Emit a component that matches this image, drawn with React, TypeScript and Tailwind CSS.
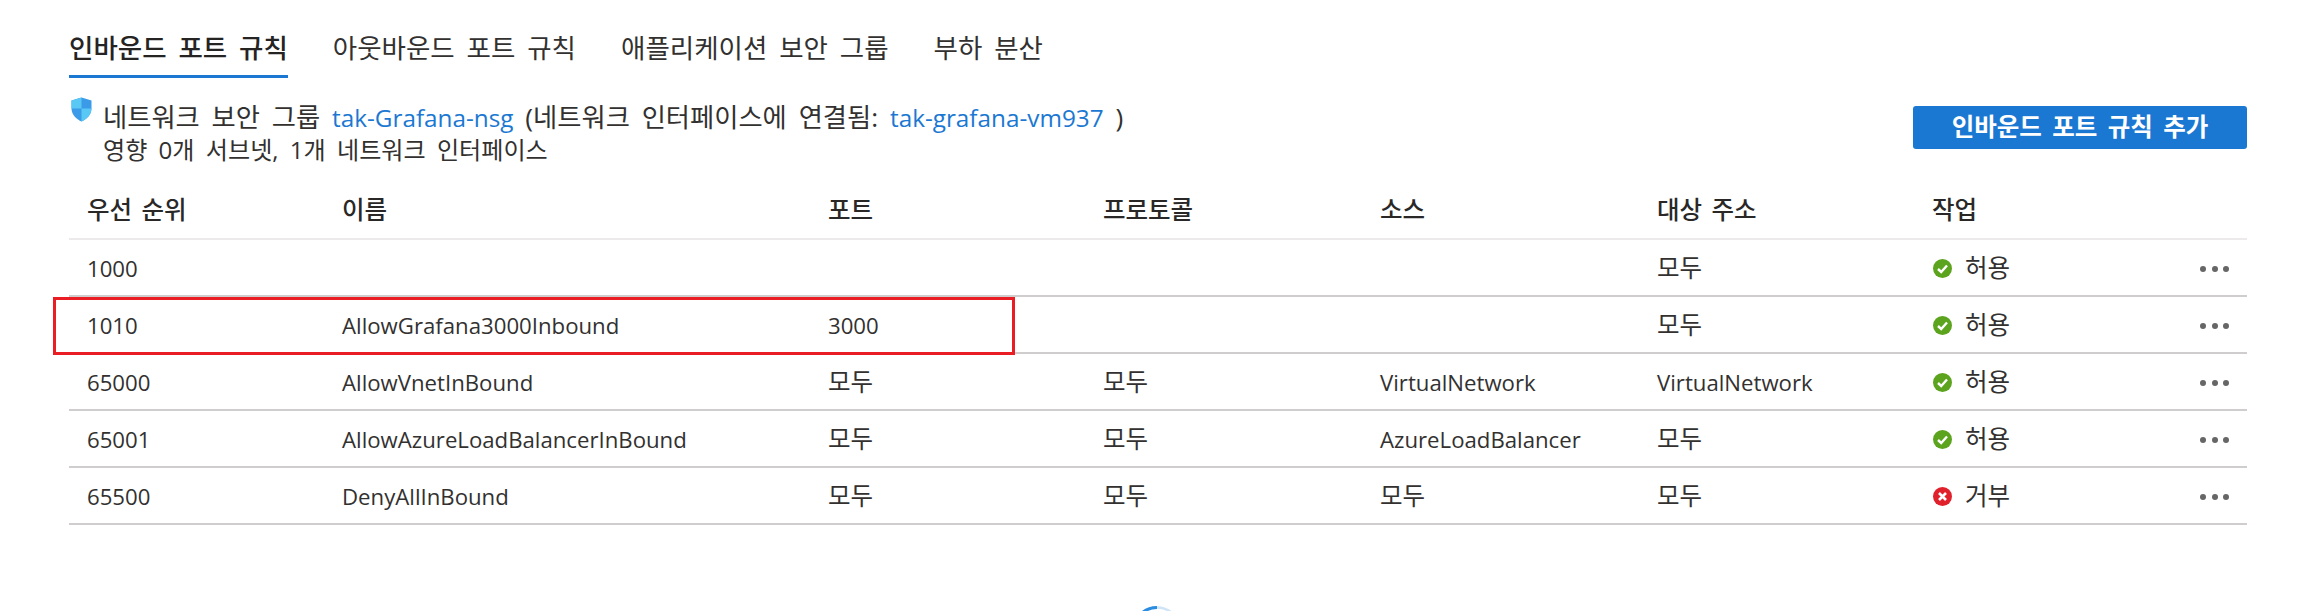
const font = "font-['Open_Sans','Noto_Sans_CJK_KR',sans-serif]";

type Row = { p: string; n: string; port: string; proto: string; src: string; dst: string; ok: boolean };
const rows: Row[] = [
  { p: "1000", n: "", port: "", proto: "", src: "", dst: "모두", ok: true },
  { p: "1010", n: "AllowGrafana3000Inbound", port: "3000", proto: "", src: "", dst: "모두", ok: true },
  { p: "65000", n: "AllowVnetInBound", port: "모두", proto: "모두", src: "VirtualNetwork", dst: "VirtualNetwork", ok: true },
  { p: "65001", n: "AllowAzureLoadBalancerInBound", port: "모두", proto: "모두", src: "AzureLoadBalancer", dst: "모두", ok: true },
  { p: "65500", n: "DenyAllInBound", port: "모두", proto: "모두", src: "모두", dst: "모두", ok: false },
];
const grid = "grid grid-cols-[255px_486px_275px_277px_277px_275px_333px] items-center";
const heads = ["우선 순위", "이름", "포트", "프로토콜", "소스", "대상 주소", "작업"];

function Cell({ t }: { t: string }) {
  const ko = t === "모두";
  return <div className={`pl-[18px] ${ko ? "text-[24.500px]" : "text-[22.200px]"}`}>{t}</div>;
}

function Status({ ok }: { ok: boolean }) {
  return (
    <div className="flex items-center justify-between pl-[19px] pr-[18px]">
      <div className="flex items-center gap-[13px]">
        <svg width="19" height="19" viewBox="0 0 19 19">
          <circle cx="9.500" cy="9.500" r="9.500" fill={ok ? "#5ca31e" : "#e0202a"} />
          {ok ? (
            <path d="M5 10l3.200 3L14 6.500" fill="none" stroke="#fff" strokeWidth="2.400" />
          ) : (
            <path d="M6 6l7 7M13 6l-7 7" fill="none" stroke="#fff" strokeWidth="2.600" />
          )}
        </svg>
        <span className="text-[24.500px]">{ok ? "허용" : "거부"}</span>
      </div>
      <div className="flex gap-[5.500px]">
        <i className="block w-[6px] h-[6px] rounded-full bg-[#666]" />
        <i className="block w-[6px] h-[6px] rounded-full bg-[#666]" />
        <i className="block w-[6px] h-[6px] rounded-full bg-[#666]" />
      </div>
    </div>
  );
}

export default function App() {
  return (
    <div className={`${font} relative h-[611px] w-[2306px] overflow-hidden bg-white pl-[69px] pr-[59px] text-[#323130] text-[22px]`}>
      <div className="flex gap-[45px] pt-[28px] text-[26.500px] leading-[40px] [word-spacing:5px]">
        <div className="h-[50px] border-b-[3px] border-[#1b78d2] font-medium text-[#252423]">인바운드 포트 규칙</div>
        <div>아웃바운드 포트 규칙</div>
        <div>애플리케이션 보안 그룹</div>
        <div>부하 분산</div>
      </div>
      <div className="flex items-start justify-between pt-[23px]">
        <div className="flex gap-[11px] pl-[2px] leading-[32px] text-[26.300px] [word-spacing:5px]">
          <svg width="21" height="25" viewBox="0 0 21 25" className="mt-[-4px] shrink-0">
            <path d="M10.500 0.500L20.500 3.500V11.500C20.500 18 15 22.500 10.500 24.500C6 22.500 0.500 18 0.500 11.500V3.500Z" fill="#3b9be8" />
            <path d="M10.500 0.500L0.500 3.500V11.500H10.500Z" fill="#5ac8f5" />
            <path d="M10.500 11.500H20.500C20.500 18 15 22.500 10.500 24.500Z" fill="#5ac8f5" />
          </svg>
          <div>
            <div>
              네트워크 보안 그룹 <span className="text-[24.300px] text-[#1b78d2] [word-spacing:0]">tak-Grafana-nsg</span> (네트워크 인터페이스에 연결됨:{" "}
              <span className="text-[24.300px] text-[#1b78d2] [word-spacing:0]">tak-grafana-vm937</span> )
            </div>
            <div className="text-[24.100px] [word-spacing:5px]">영향 0개 서브넷, 1개 네트워크 인터페이스</div>
          </div>
        </div>
        <button className="mt-[5px] h-[43px] w-[334px] rounded-[3px] bg-[#1b78d2] text-[24.500px] font-semibold text-white [word-spacing:4px]">
          인바운드 포트 규칙 추가
        </button>
      </div>
      <div className="mt-[16px]">
        <div className={`${grid} h-[58px] border-b-2 border-[#eceaea] text-[24.500px] font-medium text-[#292827] [word-spacing:3px]`}>
          {heads.map((h) => (
            <div key={h} className="pl-[18px]">{h}</div>
          ))}
        </div>
        {rows.map((r) => (
          <div key={r.p} className={`${grid} h-[57px] border-b-2 border-[#cfcdcd] pt-[2px]`}>
            <Cell t={r.p} />
            <Cell t={r.n} />
            <Cell t={r.port} />
            <Cell t={r.proto} />
            <Cell t={r.src} />
            <Cell t={r.dst} />
            <Status ok={r.ok} />
          </div>
        ))}
      </div>
      <div className="absolute left-[53px] top-[297px] h-[58px] w-[962px] border-[3px] border-[#ea1c24]" />
      <svg className="absolute left-[1132px] top-[606px]" width="50" height="50" viewBox="0 0 50 50">
        <circle cx="25" cy="25" r="23.500" fill="none" stroke="#cfe4f7" strokeWidth="2.500" />
        <path d="M8.400 8.400A23.500 23.500 0 0 1 25 1.500" fill="none" stroke="#2b8ce0" strokeWidth="3" />
      </svg>
    </div>
  );
}
